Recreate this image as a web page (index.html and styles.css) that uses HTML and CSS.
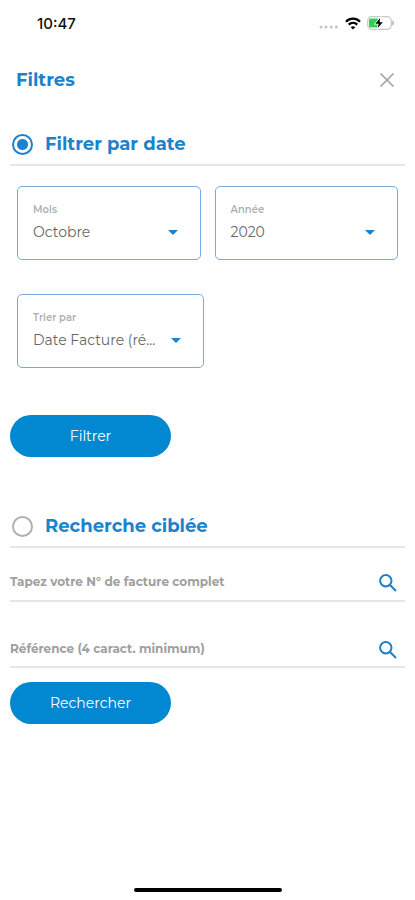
FILE: index.html
```html
<!DOCTYPE html>
<html lang="fr">
<head>
<meta charset="utf-8">
<meta name="viewport" content="width=device-width, initial-scale=1">
<title>Filtres</title>
<link rel="stylesheet" href="styles.css">
</head>
<body>
<div class="status">
  <span class="time">10:47</span>
  <div class="status-icons">
    <svg width="20" height="4" viewBox="0 0 20 4" fill="#c4c4c4" aria-hidden="true"><circle cx="2" cy="2" r="1.5"/><circle cx="7" cy="2" r="1.5"/><circle cx="12.200" cy="2" r="1.5"/><circle cx="17.400" cy="2" r="1.5"/></svg>
    <svg class="wifi" width="16" height="13" viewBox="0 0 16 13" fill="none" stroke="#000" stroke-width="2.200" aria-hidden="true"><path d="M1 4.700C5 .7 11 .7 15 4.700M3.700 7.600c2.500-2.400 6.100-2.400 8.600 0"/><path d="M8 12.500L5.800 10.200c1.300-1.200 3.100-1.200 4.400 0z" fill="#000" stroke="none"/></svg>
    <svg width="28" height="14" viewBox="0 0 28 14" aria-hidden="true"><rect x=".7" y=".7" width="23.600" height="12.600" rx="4" fill="#fff" stroke="#c8c8c8" stroke-width="1.200"/><path d="M3.500 2.500H11v9H3.500a1.500 1.500 0 0 1-1.500-1.500V4a1.500 1.500 0 0 1 1.500-1.500z" fill="#30cf58"/><path d="M25.300 4.200c2.300 1.400 2.300 4.200 0 5.600z" fill="#b5b5b5"/><path d="M13.200 2L8.300 7.800h3.300L10.800 12l5-5.800h-3.200z" fill="#000" stroke="#fff" stroke-width="1.500" paint-order="stroke"/></svg>
  </div>
</div>
<header class="header">
  <h1>Filtres</h1>
  <button class="close" type="button" aria-label="Fermer"><svg width="16" height="16" viewBox="0 0 16 16" fill="none" stroke="#a3a3a3" stroke-width="1.700" aria-hidden="true"><path d="M1.500 1.500l13 13M14.500 1.500l-13 13"/></svg></button>
</header>
<main>
  <form class="by-date">
    <label class="choice"><input type="radio" name="mode" checked><span>Filtrer par date</span></label>
    <div class="fields">
      <div class="field">
        <label for="month">Mois</label>
        <div class="picker">
          <select id="month"><option>Octobre</option></select>
          <svg width="10" height="5" viewBox="0 0 10 5" aria-hidden="true"><path d="M0 0h10L5 5z"/></svg>
        </div>
      </div>
      <div class="field">
        <label for="year">Année</label>
        <div class="picker">
          <select id="year"><option>2020</option></select>
          <svg width="10" height="5" viewBox="0 0 10 5" aria-hidden="true"><path d="M0 0h10L5 5z"/></svg>
        </div>
      </div>
      <div class="field field-sort">
        <label for="sort">Trier par</label>
        <div class="picker">
          <select id="sort"><option>Date Facture (ré...</option></select>
          <svg width="10" height="5" viewBox="0 0 10 5" aria-hidden="true"><path d="M0 0h10L5 5z"/></svg>
        </div>
      </div>
    </div>
    <button class="submit" type="button">Filtrer</button>
  </form>
  <form class="targeted">
    <label class="choice"><input type="radio" name="mode"><span>Recherche ciblée</span></label>
    <div class="search">
      <input type="text" aria-label="Numéro de facture" placeholder="Tapez votre N° de facture complet">
      <button type="button" aria-label="Rechercher la facture"><svg width="18" height="18" viewBox="0 0 18 18" fill="none" stroke="#1c7fc9" stroke-width="2" aria-hidden="true"><circle cx="6.800" cy="6.800" r="5.700"/><path d="M10.800 10.800l6.200 6.200"/></svg></button>
    </div>
    <div class="search search-ref">
      <input type="text" aria-label="Référence" placeholder="Référence (4 caract. minimum)">
      <button type="button" aria-label="Rechercher la référence"><svg width="18" height="18" viewBox="0 0 18 18" fill="none" stroke="#1c7fc9" stroke-width="2" aria-hidden="true"><circle cx="6.800" cy="6.800" r="5.700"/><path d="M10.800 10.800l6.200 6.200"/></svg></button>
    </div>
    <button class="submit" type="button">Rechercher</button>
  </form>
</main>
<div class="home-bar"></div>
</body>
</html>
```
FILE: styles.css
```css
* { box-sizing: border-box; }
body {
  margin: 0;
  min-height: 100vh;
  display: flex;
  flex-direction: column;
  background: #fff;
  color: #555;
  font-family: Montserrat, Inter, sans-serif;
}
button, input, select { font-family: inherit; }
button { padding: 0; border: 0; background: none; cursor: pointer; }
svg { display: block; }

.status {
  height: 46px;
  padding: 0 20px 0 37px;
  display: flex;
  align-items: center;
  justify-content: space-between;
}
.time { font-family: Inter, sans-serif; font-size: 15px; font-weight: 500; color: #111; }
.status-icons { display: flex; align-items: center; gap: 6px; }
.status-icons svg:first-child { margin-top: 8px; }

.header {
  height: 68px;
  padding: 0 20px 0 16px;
  display: flex;
  align-items: center;
  justify-content: space-between;
}
h1 { margin: 0; font-size: 18px; font-weight: 700; color: #1c82cc; }

main { padding: 0 10px; flex: 1; }
.choice {
  height: 52px;
  padding: 10px 2px 0;
  display: flex;
  align-items: center;
  gap: 12px;
  border-bottom: 2px solid #e6e6e6;
  font-size: 18px;
  font-weight: 700;
  color: #1c82cc;
}
.choice input {
  appearance: none;
  flex: none;
  width: 21px;
  height: 21px;
  margin: 0;
  border: 2px solid #b0b0b0;
  border-radius: 50%;
}
.choice input:checked {
  border-color: #1c82cc;
  background: radial-gradient(circle, #1c82cc 5px, transparent 6px);
}

.fields {
  padding: 20px 7px 0;
  display: grid;
  grid-template-columns: 1fr 1fr;
  gap: 34px 14px;
}
.field {
  height: 74px;
  padding: 16px 15px;
  display: flex;
  flex-direction: column;
  gap: 3px;
  border: 1px solid #78aade;
  border-radius: 5px;
}
.field-sort { margin-right: -3px; }
.field label { font-size: 10px; line-height: 14px; font-weight: 600; color: #b0b0b0; }
.picker { display: grid; align-items: center; }
.picker > * { grid-area: 1 / 1; }
.picker svg {
  justify-self: end;
  margin-right: 7px;
  fill: #1c82cc;
  pointer-events: none;
}
.picker select {
  appearance: none;
  width: 100%;
  height: 24px;
  padding: 0 20px 0 0;
  border: 0;
  background: none;
  font-size: 14px;
  font-weight: 400;
  color: #666;
}

.submit {
  display: block;
  width: 161px;
  height: 42px;
  border-radius: 21px;
  background: #0288d1;
  color: #fff;
  font-size: 14px;
}
.by-date .submit { margin-top: 47px; }
.targeted { margin-top: 39px; }

.search {
  height: 54px;
  padding: 14px 8px 0 0;
  display: flex;
  align-items: center;
  border-bottom: 2px solid #e6e6e6;
}
.search button { padding-top: 3px; }
.search-ref { height: 66px; padding-top: 28px; margin-bottom: 14px; }
.search input {
  flex: 1;
  min-width: 0;
  height: 24px;
  padding: 0;
  border: 0;
  outline: 0;
  background: none;
  font-size: 12px;
  font-weight: 700;
  color: #777;
}
.search input::placeholder { color: #a0a0a0; opacity: 1; }

.home-bar {
  align-self: center;
  width: 148px;
  height: 4px;
  margin-bottom: 8px;
  border-radius: 2px;
  background: #000;
}
```
